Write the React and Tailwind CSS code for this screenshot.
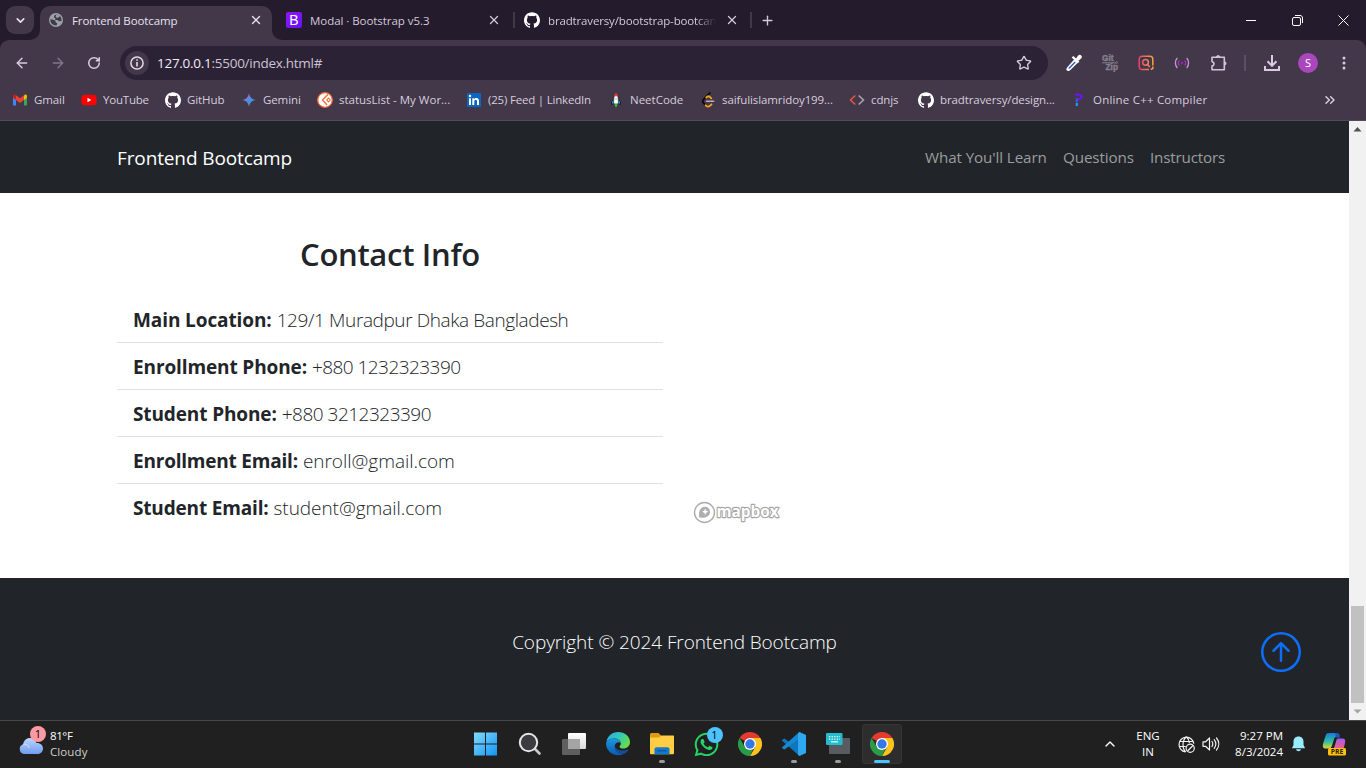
import React from "react";
import { ArrowLeft, ArrowRight, RotateCw, Star, X, Plus, ChevronDown, ChevronUp, ChevronsRight } from "lucide-react";
import { FaYoutube, FaWhatsapp } from "react-icons/fa";
import { SiGithub } from "react-icons/si";
import { BsArrowUpCircle } from "react-icons/bs";

function Globe() {
  return (
    <svg width="14" height="14" viewBox="0 0 14 14">
      <circle cx="7" cy="7" r="7" fill="#9aa0a6" />
      <path d="M7.300 1.400 5.300 2.500 4.900 4.300 6.500 5.400 6 6.900h2.700l1.200 1.300 2.600-.2C12.900 4.500 10.800 1.700 7.300 1.400Z" fill="#42384a" />
      <path d="M7.500 1.400c1.600 0 2.700.6 3.600 1.500L9.900 4.300 7.800 4.900 6.600 3.600Z" fill="#9aa0a6" />
      <path d="M1.300 6.600h2.600l2.500 1.200.3 1.600 1.500.8-.6 2.300C3.900 12.600 1.200 10.300 1.300 6.600Z" fill="#42384a" />
    </svg>
  );
}

function BootstrapIcon() {
  return (
    <span className="flex h-4 w-4 items-center justify-center rounded-[2px] bg-linear-to-br from-[#9013fe] to-[#6610f2] font-['Liberation_Sans',sans-serif] text-[14px] leading-none text-white">
      B
    </span>
  );
}

function GmailIcon() {
  return (
    <svg width="16" height="16" viewBox="0 0 16 16">
      <path d="M1 4v8.500c0 .6.400 1 1 1h2V7Z" fill="#4285f4" />
      <path d="M15 4v8.500c0 .6-.4 1-1 1h-2V7Z" fill="#34a853" />
      <path d="M12 4.200V8l3-2.300V4.200c0-1.400-1.600-2.100-2.600-1.300Z" fill="#fbbc04" />
      <path d="M4 4.200V8L1 5.700V4.200C1 2.800 2.600 2.100 3.600 2.900Z" fill="#c5221f" />
      <path d="M4 8V3.200l4 3 4-3V8l-4 3Z" fill="#ea4335" />
    </svg>
  );
}

function GeminiIcon() {
  return (
    <svg width="16" height="16" viewBox="0 0 16 16">
      <defs>
        <linearGradient id="gem" x1="0" y1="0" x2="1" y2="1">
          <stop offset="0.2" stopColor="#9b72cb" />
          <stop offset="0.55" stopColor="#4a8fe0" />
          <stop offset="1" stopColor="#2ca3d8" />
        </linearGradient>
      </defs>
      <path d="M8 1.500C8.800 5.300 10.700 7.200 14.500 8 10.700 8.800 8.800 10.700 8 14.500 7.200 10.700 5.300 8.800 1.500 8 5.300 7.200 7.200 5.300 8 1.500Z" fill="url(#gem)" />
    </svg>
  );
}

function StatusIcon() {
  return (
    <svg width="16" height="16" viewBox="0 0 16 16">
      <circle cx="8" cy="8" r="7.300" fill="#fff" stroke="#f06a35" strokeWidth="1.300" />
      <path d="M11 2.500 5.500 8l4.500 5" fill="none" stroke="#ef6a36" strokeWidth="1.300" />
      <path d="m11.500 6 1.800 2-1.800 2-1.700-2Z" fill="none" stroke="#ef6a36" strokeWidth="1.100" />
    </svg>
  );
}

function LinkedInIcon() {
  return (
    <svg width="16" height="16" viewBox="0 0 16 16">
      <rect x="1" y="1" width="14" height="14" rx="1" fill="#0a66c2" />
      <path d="M3 6.200h2V13H3zM6.300 6.200h1.900v1c.4-.7 1.100-1.200 2.200-1.200 2 0 2.600 1.300 2.600 3.200V13h-2V9.600c0-1-.2-1.800-1.200-1.800S8.300 8.500 8.300 9.500V13h-2z" fill="#fff" />
      <circle cx="4" cy="4" r="1.200" fill="#fff" />
    </svg>
  );
}

function RocketIcon() {
  return (
    <svg width="16" height="16" viewBox="0 0 16 16">
      <path d="M5.500 7 3.500 10v2.500l2-1h5l2 1V10l-2-3Z" fill="#1aa5d8" stroke="#111" strokeWidth=".8" />
      <path d="M8 1C5.900 3 5.500 6 5.700 12h4.600C10.500 6 10.100 3 8 1Z" fill="#fff" stroke="#26202e" strokeWidth=".7" />
      <path d="M8 1C7 2 6.400 3 6.100 4.200h3.800C9.600 3 9 2 8 1Z" fill="#ee342b" />
      <circle cx="8" cy="7" r="1.100" fill="#c9d7e2" />
      <path d="M6.300 12.200h3.400L8 15.500Z" fill="#35d62a" />
    </svg>
  );
}

function LeetIcon() {
  return (
    <svg width="16" height="16" viewBox="0 0 16 16" fill="none" strokeLinecap="round">
      <path d="M9.800 1.200 3.600 7.300c-1.300 1.200-1.200 2.600 0 3.800L5.800 13.400" stroke="#070707" strokeWidth="1.700" />
      <path d="m6.200 5.500 1-.8c.7-.5 1.900-.4 2.600.2l1.500 1.400M5.600 13.200c1.300 1.900 3.600 1.600 4.700.3l1.200-1.200" stroke="#ffa116" strokeWidth="1.800" />
      <path d="M6.500 9.200h7.200" stroke="#b3b3b3" strokeWidth="1.500" />
    </svg>
  );
}

function CdnIcon() {
  return (
    <svg width="16" height="16" viewBox="0 0 16 16" fill="none" strokeWidth="1.600">
      <path d="M6.300 3.500 1.500 8l4.800 4.500" stroke="#e0593a" />
      <path d="M9.700 3.500 14.500 8l-4.800 4.500" stroke="#a9a3ad" />
    </svg>
  );
}

function ProgramizIcon() {
  return (
    <svg width="16" height="16" viewBox="0 0 16 16" fill="none">
      <path d="M4.500 3.200c3-1.800 6.300-.3 5.900 2-.3 1.500-1.900 2.100-3.700 2.500" stroke="#6a16ee" strokeWidth="2.200" />
      <path d="M5.800 6.500v3.700" stroke="#4a50f4" strokeWidth="2" />
      <path d="M5.800 10.800V14" stroke="#1ba9f5" strokeWidth="2" />
    </svg>
  );
}

function Eyedropper() {
  return (
    <svg width="18" height="18" viewBox="0 0 18 18">
      <path d="m9.600 5 3.400 3.400-7.600 7.700c-1.200 1.100-2.700 1.300-3.500.5s-.6-2.300.4-3.400Z" fill="#fff" />
      <path d="m9.700 7.400 1 1-5.800 6c-.8.800-1.900.3-1.300-.7Z" fill="#3156c8" />
      <path d="m11 4.500 1.800-2.600c1-1.300 2.500-1.300 3.400-.4s.9 2.300-.3 3.300l-2.500 1.900 1 1-1.700 1.600-6-5.800L8.300 2Z" fill="#fff" />
    </svg>
  );
}

function GitZip() {
  return (
    <svg width="18" height="18" viewBox="0 0 18 18" fontFamily="Liberation Sans, sans-serif" fontWeight="700" fontSize="8.500" fill="#857f8a" stroke="#857f8a" strokeWidth=".4">
      <text x="1" y="7" textLength="11.500" lengthAdjust="spacingAndGlyphs">Git</text>
      <text x="4.500" y="16.300" textLength="12.500" lengthAdjust="spacingAndGlyphs">Zip</text>
      <path d="M1 8.800h13.500" strokeWidth="1" />
      <circle cx="15.500" cy="8.600" r="1" fill="none" strokeWidth=".8" />
    </svg>
  );
}

function InstaSearch() {
  return (
    <svg width="16" height="16" viewBox="0 0 16 16" fill="none" stroke="url(#ins)" strokeWidth="1.500">
      <defs>
        <linearGradient id="ins" x1="0" y1="1" x2="16" y2="0" gradientUnits="userSpaceOnUse">
          <stop offset="0" stopColor="#e83e6f" />
          <stop offset="1" stopColor="#fba83e" />
        </linearGradient>
      </defs>
      <path d="M11 14.500H4A2.800 2.800 0 0 1 1.200 11.700V4A2.800 2.800 0 0 1 4 1.200h8A2.800 2.800 0 0 1 14.800 4v6.500" />
      <circle cx="7.500" cy="7.300" r="2.900" />
      <path d="m9.500 9.500 2.300 2.500M12.800 14.500l2-1v-2" />
    </svg>
  );
}

function Signal() {
  return (
    <svg width="16" height="14" viewBox="0 0 16 14" fill="none" strokeWidth="1.300">
      <path d="M3.300 2C.8 4.700.8 9.300 3.300 12M12.700 2c2.500 2.700 2.500 7.300 0 10" stroke="#c39ad0" />
      <path d="M5.300 4.400c-1.200 1.500-1.200 3.700 0 5.200M10.700 4.400c1.200 1.500 1.200 3.700 0 5.200" stroke="#a032b4" />
      <circle cx="8" cy="7" r="1.300" fill="#a01fb8" />
    </svg>
  );
}

function Puzzle() {
  return (
    <svg className="ml-0.5" width="18" height="18" viewBox="0 0 18 18" fill="none" stroke="#d2c4da" strokeWidth="1.600" strokeLinejoin="round">
      <path d="M2 3.300h12.300v12.500H2v-3.700c2.700-.6 2.700-4 0-4.500Z" />
      <path d="M6.200 2.900a2 2 0 0 1 3.800 0ZM14.700 7.500a2 2 0 0 1 0 3.800Z" fill="#d2c4da" strokeWidth=".8" />
    </svg>
  );
}

function Download() {
  return (
    <svg width="18" height="18" viewBox="0 0 18 18" fill="none" stroke="#d9cbe0" strokeWidth="2">
      <path d="M9 1v10.500M4.500 7.300 9 11.800l4.500-4.500M2 12v4h14v-4" />
    </svg>
  );
}

function ChromeIcon() {
  return (
    <svg width="24" height="24" viewBox="0 0 24 24">
      <path d="M12 12 1.600 6A12 12 0 0 1 22.400 6Z" fill="#e33b2e" />
      <path d="M12 6h10.400A12 12 0 0 1 12 24l5.200-9Z" fill="#fcc31e" />
      <path d="M1.600 6 6.800 15 12 18l3.200-.9L12 24A12 12 0 0 1 1.600 6Z" fill="#2a9c48" />
      <circle cx="12" cy="12" r="6" fill="#fff" />
      <circle cx="12" cy="12" r="4.700" fill="#3478e8" />
    </svg>
  );
}

function WindowsIcon() {
  return (
    <svg width="24" height="24" viewBox="0 0 24 24">
      <defs>
        <linearGradient id="win" x1="0" y1="0" x2="1" y2="1">
          <stop offset="0" stopColor="#7fdcfd" />
          <stop offset="1" stopColor="#1493f4" />
        </linearGradient>
      </defs>
      <path d="M0 .500h11v11H0ZM12 .500h11v11h-11ZM0 12.500h11v11H0ZM12 12.500h11v11h-11Z" fill="url(#win)" />
    </svg>
  );
}

function SearchIcon() {
  return (
    <svg width="24" height="24" viewBox="0 0 24 24">
      <path d="m16.500 16.500 5 5" stroke="#c9c9cb" strokeWidth="2.600" strokeLinecap="round" />
      <circle cx="10.500" cy="10.500" r="8.700" fill="#3c3c3e" stroke="#e6e6e8" strokeWidth="2" />
    </svg>
  );
}

function TaskViewIcon() {
  return (
    <svg width="26" height="24" viewBox="0 0 26 24">
      <defs>
        <linearGradient id="tv" x1="0" y1="0" x2="0" y2="1">
          <stop offset="0" stopColor="#fff" />
          <stop offset="1" stopColor="#d9d9d9" />
        </linearGradient>
      </defs>
      <rect x="7" y="1" width="18" height="16" rx="1" fill="url(#tv)" />
      <rect x="1" y="7" width="18" height="16" rx="1" fill="#5f5f5f" />
      <path d="M7 7h12v10H7Z" fill="#a4a4a4" />
    </svg>
  );
}

function EdgeIcon() {
  return (
    <svg width="24" height="24" viewBox="0 0 24 24">
      <defs>
        <linearGradient id="ed1" x1="0" y1="0" x2="1" y2=".5">
          <stop offset="0" stopColor="#2ba8e8" />
          <stop offset=".5" stopColor="#2fc6c0" />
          <stop offset="1" stopColor="#66dc4c" />
        </linearGradient>
        <linearGradient id="ed2" x1="0" y1="0" x2="0" y2="1">
          <stop offset="0" stopColor="#1b98dd" />
          <stop offset="1" stopColor="#0f58b0" />
        </linearGradient>
      </defs>
      <path d="M.3 10C1.400 4 6.200 0 12 0c7 0 12 4.600 12 10 0 4-3 6.500-6.500 6.500-2.800 0-4-1-4-1.800 0-.6 1.300-1.300 1.300-3.200C14.800 8.500 11.700 6.500 8 6.500 4.500 6.500 1.600 8 .3 10Z" fill="url(#ed1)" />
      <path d="M0 12c0-3 3.200-5.500 8-5.500 3.700 0 6.500 2.200 6.800 4.600C13.700 9.500 9 10 8.800 14c-.2 4.300 3.900 8 8.200 8.200A12 12 0 0 1 0 12Z" fill="url(#ed2)" />
      <path d="M8.800 13.500c-1.300 5 3.600 8.800 8.200 8.700 2.300-.8 4.100-2.200 5.300-4 .4-.6-.2-1-.7-.7-5.200 2.300-12.300.8-12.800-4Z" fill="#124f96" />
    </svg>
  );
}

function FolderIcon() {
  return (
    <svg width="26" height="24" viewBox="0 0 26 24">
      <path d="M1 2.500C1 1.700 1.500 1 2.500 1h7l3 3v6H1Z" fill="#e09b0d" />
      <path d="M1 5.500h9L12.500 3.500H24c.6 0 1 .4 1 1V21c0 .8-.5 1.300-1.300 1.300H2.300C1.500 22.300 1 21.800 1 21Z" fill="#ffcd43" />
      <path d="M5.500 22.300v-5c0-1.200.8-2 2-2h11c1.200 0 2 .8 2 2v5Z" fill="#1479cc" />
      <path d="M8.500 18.800h9" stroke="#0c5599" strokeWidth="1.300" />
    </svg>
  );
}

function CodeIcon() {
  return (
    <svg width="24" height="24" viewBox="0 0 24 24">
      <path d="M17.500 0 6.800 9.800 2.600 6.500.5 7.600c-.6.400-.6 1-.1 1.500L17.500 24V17L5.300 7.600 17.500 17Z" fill="#0f76bc" />
      <path d="M17.500 0 .4 14.900c-.5.500-.5 1.100.1 1.500l2.100 1.100L17.500 6.500Z" fill="#1688cf" />
      <path d="M17.500 0 24 3v18l-6.500 3c-.7-.3-1.500-1-1.500-2V2c0-1 .8-1.700 1.500-2Z" fill="#2fa8f3" />
    </svg>
  );
}

function KeyboardAppIcon() {
  return (
    <svg width="24" height="24" viewBox="0 0 24 24">
      <path d="M3 6h20c.6 0 1 .4 1 1v14c0 .6-.4 1-1 1H4c-.6 0-1-.4-1-1Z" fill="#585c61" />
      <rect x="0" y="1" width="16.500" height="12" rx="1" fill="#22bdce" />
      <path d="M3 4.700h11M3 7.200h11" stroke="#eaffff" strokeWidth="1.200" strokeDasharray="1.300 1.300" />
      <path d="M5 9.800h7" stroke="#eaffff" strokeWidth="1.200" />
    </svg>
  );
}

function CloudIcon() {
  return (
    <svg width="26" height="18" viewBox="0 0 26 18">
      <defs>
        <linearGradient id="cl" x1="0" y1="0" x2="0" y2="1">
          <stop offset="0" stopColor="#bed6ff" />
          <stop offset="1" stopColor="#6f9dee" />
        </linearGradient>
      </defs>
      <path d="M6 17a5 5 0 0 1-.8-9.700C5.500 3.500 8.500 1 12 1c3 0 5.500 2 6.500 5 3.500-.3 6.500 2 6.500 5.500 0 3-2.300 5.500-5.300 5.500Z" fill="url(#cl)" />
      <path d="M5.200 7.300C9 6.500 11 9 11 11" fill="none" stroke="#dce9ff" strokeWidth="1" />
    </svg>
  );
}

function NetIcon() {
  return (
    <svg width="17" height="17" viewBox="0 0 17 17" fill="none" stroke="#f3f3f3" strokeWidth="1.200">
      <path d="M7.500 15.900A7.400 7.400 0 1 1 15.800 7.700M1.500 5.500h14M1.200 10.500h6.500M7.800 16C4 12.500 4 4.500 8.300 1M8.500 1c1.900 1.600 2.800 3.800 2.900 6" />
      <circle cx="12.200" cy="12.200" r="4.100" />
      <path d="m9.500 15 5.500-5.500" />
    </svg>
  );
}

function SpeakerIcon() {
  return (
    <svg width="18" height="16" viewBox="0 0 18 16" fill="none" stroke="#f3f3f3" strokeWidth="1.200" strokeLinejoin="round" strokeLinecap="round">
      <path d="M1 5.800h2.600L7.500 2v12L3.600 10.300H1ZM10 5.500c1 1.500 1 3.500 0 5M12.200 3.700c2 2.600 2 6 0 8.600M14.500 2c3 3.600 3 8.400 0 12" />
    </svg>
  );
}

function CopilotIcon() {
  return (
    <svg width="24" height="24" viewBox="0 0 24 24">
      <defs>
        <linearGradient id="cp1" x1="0" y1="0" x2="0" y2="1">
          <stop offset="0" stopColor="#1b79dc" />
          <stop offset=".55" stopColor="#2cc0a0" />
          <stop offset="1" stopColor="#e8d335" />
        </linearGradient>
        <linearGradient id="cp2" x1="0" y1="0" x2="0" y2="1">
          <stop offset="0" stopColor="#a45bee" />
          <stop offset="1" stopColor="#f4617a" />
        </linearGradient>
      </defs>
      <path d="M7 1h8c1.800 0 2.400 1.700 2.800 3.500H15c-1.700 0-2.500 1-3 2.700L9.800 14c-.5 1.700-1.300 2.500-3 2.500H3.500C1 16.500.3 14.500 1 12L3.700 3.500C4.300 1.700 5.200 1 7 1Z" fill="url(#cp1)" />
      <path d="M13 1h2c1.800 0 2.400 1.700 3 4.500h-4Z" fill="#185abd" />
      <path d="M16 6.500h4.500c2.500 0 3.200 2 2.500 4.500L21.500 17H10c1.500 0 2-1 2.500-2.500l2-6.500c.3-1 .8-1.500 1.500-1.500Z" fill="url(#cp2)" />
      <rect x="6" y="16" width="18" height="7.500" rx="1.500" fill="#ffc20e" />
      <text x="15" y="22.300" textAnchor="middle" fontSize="6.800" fontWeight="700" fontFamily="Open Sans, sans-serif" fill="#2b2200">PRE</text>
    </svg>
  );
}

function Bookmark({ icon, label, box, tracking = "tracking-[-0.1px]" }) {
  return (
    <div className={`flex shrink-0 items-center gap-1.5 whitespace-nowrap ${box}`}>
      <span className="flex w-4 shrink-0 justify-center">{icon}</span>
      <span className={tracking}>{label}</span>
    </div>
  );
}

function TabStrip() {
  return (
    <div className="flex h-10 items-center bg-[#241b2d] text-[11.5px] text-[#d3c9da]">
      <div className="ml-1.5 flex h-7 w-7 items-center justify-center rounded-[9px] bg-[#42384a]">
        <ChevronDown size={13} strokeWidth={3} color="#e8dfee" />
      </div>
      <div className="relative ml-1.5 flex h-[34px] w-[232px] items-center self-end rounded-t-[10px] bg-[#42384a] pb-1.5 pl-[9px] text-[#e9e1ee]">
        <svg className="absolute bottom-0 -left-2.5" width="10" height="10" viewBox="0 0 10 10"><path d="M10 0v10H0A10 10 0 0 0 10 0Z" fill="#42384a" /></svg>
        <svg className="absolute -right-2.5 bottom-0" width="10" height="10" viewBox="0 0 10 10"><path d="M0 0v10h10A10 10 0 0 1 0 0Z" fill="#42384a" /></svg>
        <Globe />
        <span className="mt-px ml-[9px] grow tracking-[-0.1px] whitespace-nowrap">Frontend Bootcamp</span>
        <X className="mr-[9px]" size={14} strokeWidth={2.2} />
      </div>
      <div className="ml-3.5 flex w-[228px] items-center">
        <BootstrapIcon />
        <span className="mt-px ml-2 grow tracking-[-0.05px]">Modal · Bootstrap v5.3</span>
        <X className="mr-[13px]" size={14} strokeWidth={2.2} />
      </div>
      <div className="-ml-px h-4 w-[2px] bg-[#42384a]" />
      <div className="ml-[9px] flex w-[227px] items-center">
        <SiGithub size={16} color="#fff" />
        <span className="mt-px ml-2 w-[168px] overflow-hidden mask-r-from-88% tracking-[-0.15px] whitespace-nowrap">bradtraversy/bootstrap-bootcam</span>
        <X className="ml-[9px]" size={14} strokeWidth={2.2} />
      </div>
      <div className="-ml-px h-4 w-[2px] bg-[#42384a]" />
      <Plus className="ml-2" size={15} strokeWidth={2.2} />
      <div className="ml-auto flex">
        <span className="flex h-10 w-[46px] items-center justify-center"><span className="h-px w-2.5 bg-white" /></span>
        <span className="flex w-[46px] items-center justify-center">
          <svg width="11" height="11" viewBox="0 0 11 11" fill="none" stroke="#fff"><rect x=".5" y="2.500" width="8" height="8" rx="1.500" /><path d="M3 .5h5c1.500 0 2.500 1 2.500 2.500v5" /></svg>
        </span>
        <span className="flex w-[46px] items-center justify-center">
          <svg width="11" height="11" viewBox="0 0 11 11" stroke="#fff"><path d="m.5.500 10 10m0-10-10 10" /></svg>
        </span>
      </div>
    </div>
  );
}

function Toolbar() {
  const slot = "flex w-9 items-center justify-center";
  return (
    <div className="flex h-[46px] items-center pl-1">
      <span className={slot}><ArrowLeft size={16} strokeWidth={2.2} color="#d9cbe0" /></span>
      <span className={slot}><ArrowRight size={16} strokeWidth={2.2} color="#81768a" /></span>
      <span className={slot}><RotateCw size={14} strokeWidth={2.600} color="#d9cbe0" /></span>
      <div className="ml-2 flex h-[34px] w-[928px] items-center rounded-full bg-[#2c2235] pr-4 pl-[5px]">
        <span className="flex h-6 w-6 items-center justify-center rounded-full bg-[#42384a]">
          <svg width="14" height="14" viewBox="0 0 14 14"><circle cx="7" cy="7" r="6.100" fill="none" stroke="#e3dae8" strokeWidth="1.500" /><path d="M7 3.200v1.600M7 6v4.500" stroke="#e3dae8" strokeWidth="1.600" /></svg>
        </span>
        <span className="ml-2 grow text-[13.5px] tracking-[-0.27px] text-[#cdc3d4]"><span className="text-[#f3ebf8]">127.0.0.1</span>:5500/index.html#</span>
        <Star size={16} strokeWidth={2} color="#d9cbe0" />
      </div>
      <div className="ml-2 flex">
        <span className={slot}><Eyedropper /></span>
        <span className={slot}><GitZip /></span>
        <span className={slot}><InstaSearch /></span>
        <span className={slot}><Signal /></span>
        <span className={slot}><Puzzle /></span>
      </div>
      <span className="flex w-[18px] justify-center"><span className="h-4 w-[2px] bg-[#5a4f63]" /></span>
      <span className={slot}><Download /></span>
      <span className={slot}><span className="flex h-5 w-5 items-center justify-center rounded-full bg-[#ab47bc] text-[11px] text-white">S</span></span>
      <span className={slot}>
        <svg width="4" height="16" viewBox="0 0 4 16" fill="#d9cbe0"><circle cx="2" cy="3" r="1.500" /><circle cx="2" cy="8" r="1.500" /><circle cx="2" cy="13" r="1.500" /></svg>
      </span>
    </div>
  );
}

function Bookmarks() {
  return (
    <div className="flex h-7 items-center pl-3 text-[11.5px] text-[#d6cddb]">
      <Bookmark icon={<GmailIcon />} label="Gmail" box="w-[69px]" />
      <Bookmark icon={<FaYoutube size={16} color="#f00" className="rounded-sm bg-[linear-gradient(#fff,#fff)] bg-[length:8px_6px] bg-center bg-no-repeat" />} label="YouTube" box="w-[84px]" tracking="tracking-[-0.2px]" />
      <Bookmark icon={<SiGithub size={16} color="#fff" />} label="GitHub" box="w-[76px]" />
      <Bookmark icon={<GeminiIcon />} label="Gemini" box="w-[76px]" />
      <Bookmark icon={<StatusIcon />} label="statusList - My Wor..." box="w-[149px]" tracking="tracking-[0px]" />
      <Bookmark icon={<LinkedInIcon />} label="(25) Feed | LinkedIn" box="w-[142px]" tracking="tracking-[-0.2px]" />
      <Bookmark icon={<RocketIcon />} label="NeetCode" box="w-[92px]" tracking="tracking-[0px]" />
      <Bookmark icon={<LeetIcon />} label="saifulislamridoy199..." box="w-[149px]" />
      <Bookmark icon={<CdnIcon />} label="cdnjs" box="w-[69px]" />
      <Bookmark icon={<SiGithub size={16} color="#fff" />} label="bradtraversy/design..." box="w-[153px]" />
      <Bookmark icon={<ProgramizIcon />} label="Online C++ Compiler" box="w-[200px]" tracking="tracking-[0.2px]" />
      <ChevronsRight className="mr-7 ml-auto" size={16} strokeWidth={2.200} />
    </div>
  );
}

const contacts = [
  ["Main Location:", "129/1 Muradpur Dhaka Bangladesh", "tracking-[-0.1px]", "tracking-[-0.4px]"],
  ["Enrollment Phone:", "+880 1232323390", "tracking-[-0.12px]", "tracking-[-0.55px]"],
  ["Student Phone:", "+880 3212323390", "tracking-[-0.12px]", "tracking-[-0.5px]"],
  ["Enrollment Email:", "enroll@gmail.com", "tracking-[-0.21px]", "tracking-[-0.03px]"],
  ["Student Email:", "student@gmail.com", "tracking-[-0.17px]", "tracking-[-0.05px]"],
];

function WebPage() {
  return (
    <div className="flex w-[1349px] flex-col bg-white text-[#212529]">
      <nav className="flex h-[72px] items-center justify-between bg-[#212529] pt-0.5 pr-[124px] pl-[117px]">
        <span className="text-[19px] tracking-[-0.12px] text-white">Frontend Bootcamp</span>
        <div className="flex pb-0.5 text-[15.2px] text-[#9b9d9f]">
          <span className="w-[138px] tracking-[-0.1px] whitespace-nowrap">What You'll Learn</span>
          <span className="w-[87px] tracking-[-0.1px]">Questions</span>
          <span className="w-[75px] tracking-[-0.18px]">Instructors</span>
        </div>
      </nav>
      <main className="flex h-[385px] pt-10 pl-[117px]">
        <section className="w-[546px]">
          <h2 className="h-[63px] text-center text-[31px] leading-[43px] font-semibold tracking-[-0.3px]">Contact Info</h2>
          <ul className="divide-y divide-[#dee2e6]">
            {contacts.map(([label, value, lt, vt]) => (
              <li key={label} className="flex h-[47px] items-center gap-[5px] px-4 pt-[2.5px] text-[19px] whitespace-nowrap last:h-[46px]">
                <span className={`font-bold ${lt}`}>{label}</span>
                <span className={`font-light ${vt}`}>{value}</span>
              </li>
            ))}
          </ul>
        </section>
        <section className="ml-[30px] flex h-[291px] items-end">
          <svg width="90" height="24" viewBox="0 0 90 24">
            <circle cx="11.500" cy="12.500" r="10" fill="#fff" stroke="#adadad" strokeWidth="1.400" />
            <path d="M6.300 17.600C5.300 12.300 6.800 6.800 12 6.800a5 5 0 0 1 5 5c0 5-5.500 6.500-10.700 5.800Z" fill="#adadad" />
            <path d="m12.200 8.500 1 2.300 2.300 1-2.300 1-1 2.300-1-2.300-2.300-1 2.300-1Z" fill="#fff" />
            <text x="23.500" y="17.300" fontFamily="Open Sans, sans-serif" fontWeight="700" fontSize="16" textLength="62" lengthAdjust="spacingAndGlyphs" fill="#fff" stroke="#a6a6a6" strokeWidth="2.300" paintOrder="stroke" strokeLinejoin="round">mapbox</text>
          </svg>
        </section>
      </main>
      <footer className="flex h-[142px] items-center bg-[#212529] pb-[13px] text-[19px] text-white">
        <span className="ml-[474px] w-[401px] text-center font-light tracking-[-0.08px]">Copyright © 2024 Frontend Bootcamp</span>
        <BsArrowUpCircle className="mt-[18px] ml-[386px]" size={40} color="#0d6efd" />
      </footer>
    </div>
  );
}

function ScrollBar() {
  return (
    <div className="flex w-[17px] flex-col items-center bg-[#f1f1f1]">
      <svg width="17" height="17" viewBox="0 0 17 17"><path d="m8.500 6 4 4.500h-8Z" fill="#505050" /></svg>
      <div className="mt-[468px] h-[97px] w-[13px] bg-[#c1c1c1]" />
      <svg width="17" height="17" viewBox="0 0 17 17"><path d="m8.500 10.500 4-4h-8Z" fill="#a3a3a3" /></svg>
    </div>
  );
}

function TaskItem({ children, state }) {
  return (
    <div className={`flex h-10 w-10 flex-col items-center rounded-[4px] pt-2 ${state === "active" ? "bg-[#2d2d2d] ring-1 ring-[#353535] ring-inset" : ""}`}>
      <div className="relative flex h-6 items-center">{children}</div>
      {state === "open" && <div className="mt-1 h-[3px] w-1.5 rounded-full bg-[#9a9a9a]" />}
      {state === "active" && <div className="mt-1 h-[3px] w-4 rounded-full bg-[#4cc2ff]" />}
    </div>
  );
}

function Taskbar() {
  return (
    <div className="flex h-12 items-center border-t border-[#464748] bg-[#202020] pb-px text-[11.5px] text-white">
      <div className="flex w-[466px] items-center pl-[18px]">
        <div className="relative h-[30px] w-8 pt-[8px]">
          <CloudIcon />
          <span className="absolute -top-[3px] left-3 flex h-4 w-4 items-center justify-center rounded-full bg-[#ff99a4] text-[11px] text-black">1</span>
        </div>
        <div className="flex flex-col leading-4">
          <span className="tracking-[-0.4px]">81°F</span>
          <span className="tracking-[0.1px] text-[#cfcfcf]">Cloudy</span>
        </div>
      </div>
      <div className="flex gap-1">
        <TaskItem><WindowsIcon /></TaskItem>
        <TaskItem><SearchIcon /></TaskItem>
        <TaskItem><TaskViewIcon /></TaskItem>
        <TaskItem><EdgeIcon /></TaskItem>
        <TaskItem state="open"><FolderIcon /></TaskItem>
        <TaskItem>
          <FaWhatsapp size={27} color="#25d366" />
          <span className="absolute -top-[5px] -right-[3px] flex h-4 w-4 items-center justify-center rounded-full bg-[#4cc2ff] text-[11px] text-black">1</span>
        </TaskItem>
        <TaskItem><ChromeIcon /></TaskItem>
        <TaskItem state="open"><CodeIcon /></TaskItem>
        <TaskItem state="open"><KeyboardAppIcon /></TaskItem>
        <TaskItem state="active"><ChromeIcon /></TaskItem>
      </div>
      <div className="ml-auto flex items-center">
        <ChevronUp size={16} strokeWidth={2} />
        <div className="ml-[15px] flex w-[30px] flex-col items-center leading-4"><span>ENG</span><span>IN</span></div>
        <div className="ml-[15px] flex gap-[7px]"><NetIcon /><SpeakerIcon /></div>
        <div className="flex w-[63px] flex-col items-end leading-4 whitespace-nowrap"><span>9:27 PM</span><span>8/3/2024</span></div>
        <svg className="ml-2" width="15" height="16" viewBox="0 0 15 16" fill="#99ebff"><path d="M7.500.500c-3.200 0-5 2.300-5 5V9L.900 12.200h13.200L12.500 9V5.500c0-2.700-1.800-5-5-5ZM5 13.300h5c-.3 1.300-1.200 2-2.500 2s-2.200-.7-2.500-2Z" /></svg>
        <div className="mr-5 ml-4"><CopilotIcon /></div>
      </div>
    </div>
  );
}

export default function App() {
  return (
    <div className="flex h-[768px] w-[1366px] flex-col overflow-hidden bg-[#241b2d] font-['Open_Sans','Noto_Sans',sans-serif]">
      <TabStrip />
      <div className="h-[81px] rounded-t-[9px] border-b border-[#52495a] bg-[#42384a]">
        <Toolbar />
        <Bookmarks />
      </div>
      <div className="flex h-[599px]">
        <WebPage />
        <ScrollBar />
      </div>
      <Taskbar />
    </div>
  );
}
